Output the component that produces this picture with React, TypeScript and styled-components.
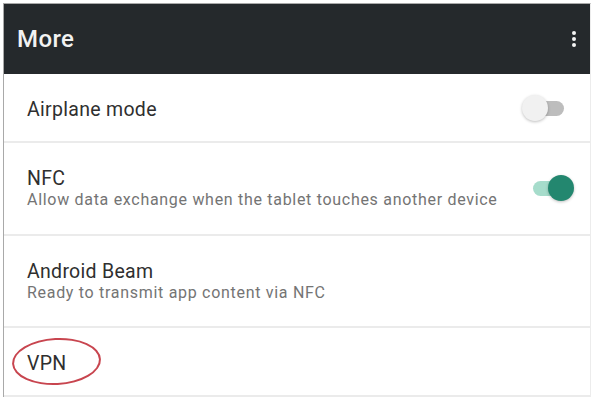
import React from 'react'
import styled, { createGlobalStyle } from 'styled-components'

const GlobalStyle = createGlobalStyle`
  html, body {
    margin: 0;
    padding: 0;
    background: #fff;
  }
  body {
    font-family: Roboto, 'Noto Sans', Arial, sans-serif;
  }
`

const settings = [
  { title: 'Airplane mode', toggle: 'off', height: 69 },
  {
    title: 'NFC',
    summary: 'Allow data exchange when the tablet touches another device',
    toggle: 'on',
    height: 93,
  },
  {
    title: 'Android Beam',
    summary: 'Ready to transmit app content via NFC',
    height: 92,
  },
  { title: 'VPN', height: 69, circled: true },
]

function App() {
  return (
    <>
      <GlobalStyle />
      <Page>
        <Frame>
          <Toolbar>
            <ToolbarTitle>More</ToolbarTitle>
            <MenuButton aria-label="More options">
              <Dot />
              <Dot />
              <Dot />
            </MenuButton>
          </Toolbar>
          <List>
            {settings.map((item) => (
              <Row key={item.title} $height={item.height}>
                <RowText>
                  <Title>
                    {item.title}
                    {item.circled && <Circle />}
                  </Title>
                  {item.summary && <Summary>{item.summary}</Summary>}
                </RowText>
                {item.toggle && (
                  <Switch $on={item.toggle === 'on'}>
                    <Thumb $on={item.toggle === 'on'} />
                  </Switch>
                )}
              </Row>
            ))}
          </List>
        </Frame>
      </Page>
    </>
  )
}

const Page = styled.div`
  width: 592px;
  height: 401px;
  padding: 3px 0 0 3px;
  box-sizing: border-box;
  overflow: hidden;
`

const Frame = styled.div`
  width: 586px;
  border-top: 1px solid #a9a9a9;
  border-left: 1px solid #a9a9a9;
  border-right: 1px solid #ececec;
  display: flex;
  flex-direction: column;
`

const Toolbar = styled.div`
  height: 70px;
  background: #25292c;
  display: flex;
  align-items: center;
  justify-content: space-between;
  padding: 0 13px;
  box-sizing: border-box;
`

const ToolbarTitle = styled.h1`
  margin: 0;
  color: #f2f2f2;
  font-size: 24px;
  font-weight: 500;
  letter-spacing: 0.4px;
`

const MenuButton = styled.div`
  display: flex;
  flex-direction: column;
  gap: 2px;
  margin-right: 1px;
`

const Dot = styled.span`
  width: 4px;
  height: 4px;
  border-radius: 50%;
  background: #f4f4f4;
`

const List = styled.div`
  display: flex;
  flex-direction: column;
`

const Row = styled.div<{ $height: number }>`
  height: ${(p) => p.$height}px;
  border-bottom: 2px solid #ebebeb;
  display: flex;
  align-items: flex-start;
  justify-content: space-between;
  padding: 25px 25px 0 23px;
  box-sizing: border-box;
`

const RowText = styled.div`
  display: flex;
  flex-direction: column;
`

const Title = styled.div`
  position: relative;
  color: #2f2f2f;
  font-size: 19.5px;
  line-height: 22px;
  letter-spacing: 0.3px;
`

const Summary = styled.div`
  margin-top: 1px;
  color: #747474;
  font-size: 16px;
  line-height: 18px;
  letter-spacing: 0.7px;
`

const Circle = styled.span`
  position: absolute;
  left: -15px;
  top: -15px;
  width: 85px;
  height: 43px;
  border: 2px solid #c8454f;
  border-radius: 50%;
  transform: rotate(-3deg);
`

const Switch = styled.div<{ $on: boolean }>`
  position: relative;
  width: 34px;
  height: 15px;
  border-radius: 8px;
  background: ${(p) => (p.$on ? '#a6dccb' : '#bdbdbd')};
  margin-top: ${(p) => (p.$on ? '13px' : '2px')};
  margin-right: ${(p) => (p.$on ? '-2px' : '1px')};
`

const Thumb = styled.span<{ $on: boolean }>`
  position: absolute;
  top: -6px;
  left: ${(p) => (p.$on ? '15px' : '-8px')};
  width: 26px;
  height: 26px;
  border-radius: 50%;
  background: ${(p) => (p.$on ? '#23876f' : '#f1f1f1')};
  box-shadow: 0 1px 3px rgba(0, 0, 0, 0.25);
`

export default App
